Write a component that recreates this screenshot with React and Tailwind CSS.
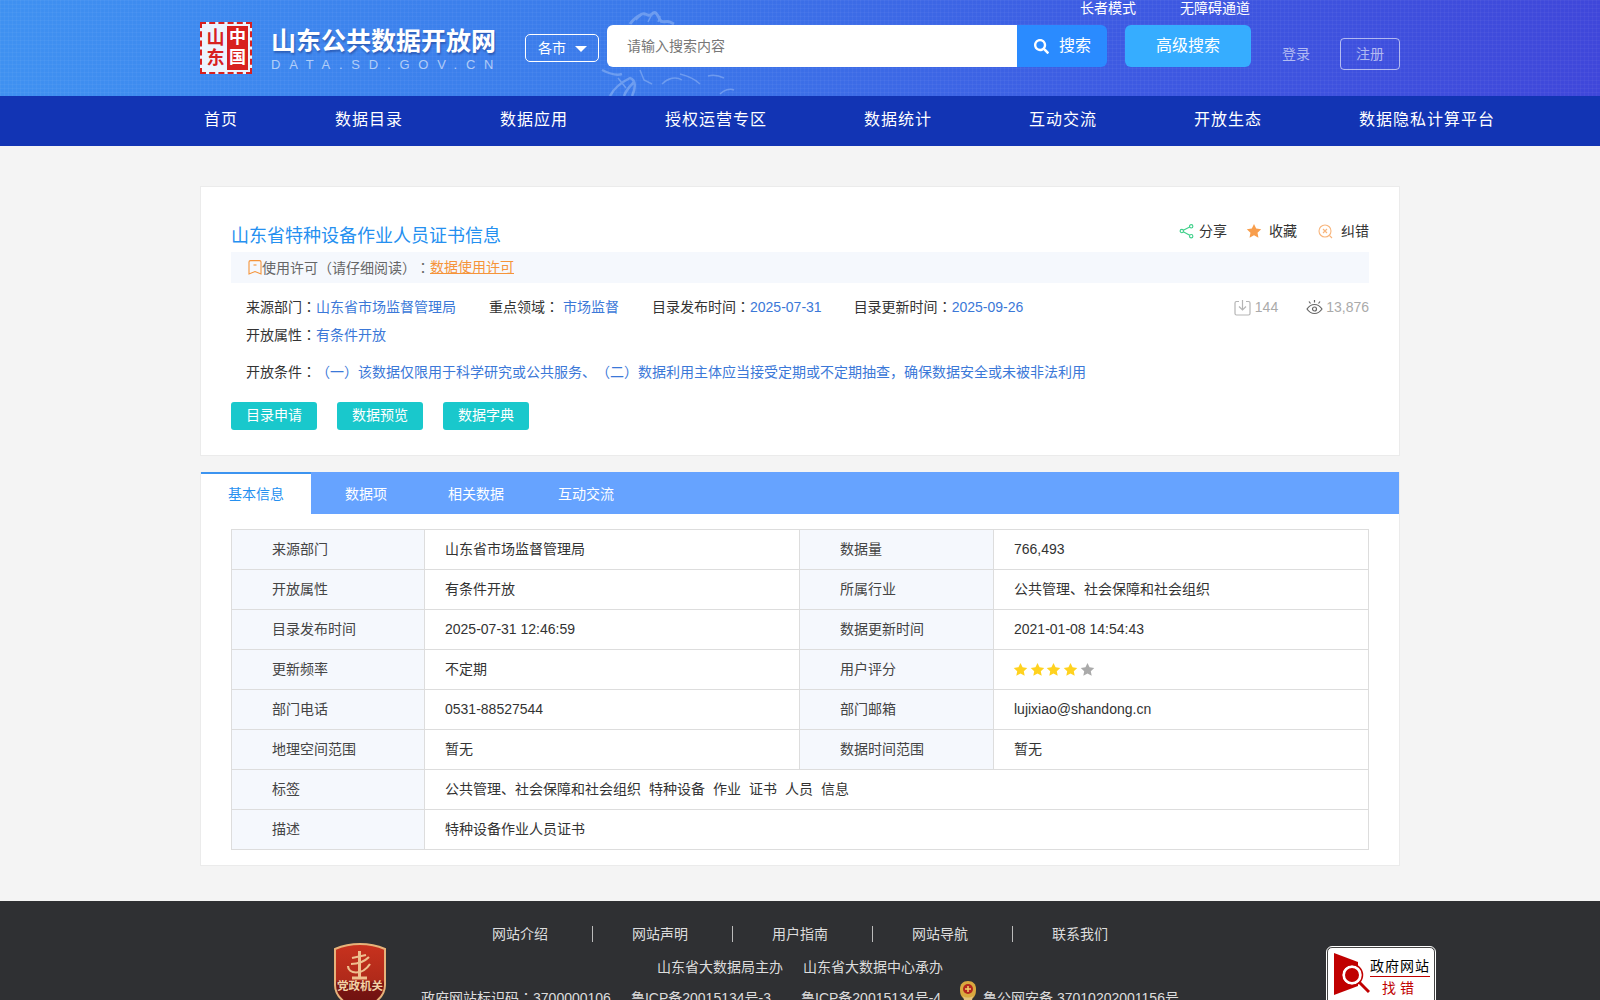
import { FaSearch } from "react-icons/fa";

const FONT = "font-['Liberation_Sans','Noto_Sans_CJK_SC',sans-serif]";

const navItems = ["首页", "数据目录", "数据应用", "授权运营专区", "数据统计", "互动交流", "开放生态", "数据隐私计算平台"];

const tabs = [
  { name: "基本信息", cls: "w-[110px] bg-white text-[#2590f0] border-t-2 border-[#3c94f0] justify-center" },
  { name: "数据项", cls: "w-[110px] pt-[2px] pl-[34px] text-white" },
  { name: "相关数据", cls: "w-[110px] pt-[2px] pl-[27px] text-white" },
  { name: "互动交流", cls: "w-[110px] pt-[2px] pl-[27px] text-white" },
];

const rows = [
  ["来源部门", "山东省市场监督管理局", "数据量", "766,493"],
  ["开放属性", "有条件开放", "所属行业", "公共管理、社会保障和社会组织"],
  ["目录发布时间", "2025-07-31 12:46:59", "数据更新时间", "2021-01-08 14:54:43"],
  ["更新频率", "不定期", "用户评分", "stars"],
  ["部门电话", "0531-88527544", "部门邮箱", "lujixiao@shandong.cn"],
  ["地理空间范围", "暂无", "数据时间范围", "暂无"],
];

const Star = ({ className, size = 15 }) => (
  <svg width={size} height={size} viewBox="0 0 24 24" className={className} fill="currentColor">
    <path d="M12 1.500l3.300 6.900 7.500 1-5.500 5.200 1.400 7.500L12 18.500l-6.700 3.600 1.400-7.500L1.200 9.400l7.500-1z" />
  </svg>
);

// full-width colon sitting in the middle of its box
const Colon = () => <span className="font-['Noto_Sans_CJK_TC',sans-serif]">：</span>;

const Logo = () => (
  <div className="flex items-start shrink-0">
    <div className="w-[52px] h-[52px] mt-[22px] p-[2px] bg-white/90 border-2 border-dashed border-[#d8201f] flex">
      <div className="w-[24px] flex flex-col items-center justify-center text-[#d8201f] text-[18px] leading-[20px] font-bold">
        <span>山</span>
        <span>东</span>
      </div>
      <div className="w-[22px] bg-[#d8201f] flex flex-col items-center justify-center text-white text-[17px] leading-[20px] font-bold">
        <span>中</span>
        <span>国</span>
      </div>
    </div>
    <div className="ml-[19px] mt-[25px] w-[225px]">
      <div className="text-[25px] leading-[32px] font-bold text-white whitespace-nowrap [text-shadow:1px_2px_2px_rgba(0,0,60,.3)]">
        山东公共数据开放网
      </div>
      <div className="text-[13px] leading-[16px] text-white/60 tracking-[8.800px] whitespace-nowrap">
        DATA.SD.GOV.CN
      </div>
    </div>
  </div>
);

const Header = () => (
  <div className="h-[96px] bg-[linear-gradient(90deg,#3f91f1_0%,#3b79ea_40%,#3d5ae2_70%,#3f47da_100%)] relative overflow-hidden">
    {/* faint grid texture + map */}
    <div className="absolute inset-0 bg-[linear-gradient(rgba(255,255,255,.035)_1px,transparent_1px),linear-gradient(90deg,rgba(255,255,255,.035)_1px,transparent_1px)] bg-[length:4px_4px]" />
    <svg className="absolute left-[600px] top-0 opacity-35" width="200" height="96" viewBox="0 0 200 96" fill="none" stroke="#c4dbfb" strokeWidth="1.500">
      <path d="M30 24c4-6 8-8 12-10s6 4 10 0 6 2 8 6 6 0 10 2 4 2 4 2" strokeWidth="3" />
      <path d="M36 20l6-6M48 22l4-8M58 22l2-6" />
      <path d="M2 70c8 4 14 6 20 4M10 96c4-8 12-14 20-18 6 2 6 10 2 18M24 96c2-6 6-10 10-14" strokeWidth="2.500" />
      <path d="M18 78l8 10M40 70l4 10 8 4" />
      <path d="M62 84c6-6 14-8 20-4M80 74c8 2 14 4 20 10M108 76c6-2 12 0 16 2M120 94c4-4 10-6 14-4" />
    </svg>
    <div className="w-[1200px] mx-auto h-full flex relative">
      <Logo />
      <div className="ml-[29px] flex-1">
        <div className="h-[25px] flex items-start pl-[555px] text-[14px] leading-[17px] text-white whitespace-nowrap">
          <span>长者模式</span>
          <span className="ml-[44px]">无障碍通道</span>
        </div>
        <div className="flex items-start whitespace-nowrap">
          <div className="mt-[9px] w-[74px] h-[28px] border border-white rounded-[5px] flex items-center pl-[12px] text-white text-[14px]">
            各市
            <span className="ml-[9px] mt-[2px] w-0 h-0 border-x-[6px] border-x-transparent border-t-[6px] border-t-white" />
          </div>
          <div className="ml-[8px] w-[410px] h-[42px] bg-white rounded-l-[6px] flex items-center pl-[20px] text-[14px] text-[#777]">
            请输入搜索内容
          </div>
          <div className="w-[90px] h-[42px] bg-[#2a8bff] rounded-r-[6px] flex items-center pl-[17px] text-white text-[16px]">
            <FaSearch size={15} />
            <span className="ml-[10px]">搜索</span>
          </div>
          <div className="ml-[18px] w-[126px] h-[42px] bg-[#36adff] rounded-[6px] flex items-center justify-center text-white text-[16px]">
            高级搜索
          </div>
          <div className="ml-[31px] mt-[20px] text-[14px] leading-[18px] text-white/60">登录</div>
          <div className="ml-[30px] mt-[13px] w-[60px] h-[32px] border border-white/60 rounded-[4px] flex items-center justify-center text-[14px] text-white/60">
            注册
          </div>
        </div>
      </div>
    </div>
  </div>
);

const Nav = () => (
  <div className="h-[50px] bg-[#1234b4]">
    <div className="w-[1200px] mx-auto h-full pl-[4px] pb-[2px] flex items-center gap-[97px] text-[16px] text-white tracking-[1px] whitespace-nowrap">
      {navItems.map((item) => (
        <span key={item}>{item}</span>
      ))}
    </div>
  </div>
);

const ShareIcon = () => (
  <svg width="15" height="16" viewBox="0 0 16 16" fill="none" stroke="#3fd08a" strokeWidth="1.200">
    <circle cx="13" cy="3" r="1.800" />
    <circle cx="3" cy="8" r="1.800" />
    <circle cx="13" cy="13.500" r="1.800" />
    <path d="M4.600 7.200l6.800-3.400M4.600 8.800l6.800 3.800" />
  </svg>
);

const WrongIcon = () => (
  <svg width="15" height="15" viewBox="0 0 15 15" fill="none" stroke="#f8b57c" strokeWidth="1.100">
    <circle cx="7" cy="7" r="6" />
    <path d="M5 5l4 4M9 5l-4 4M11.500 11.500l2.500 2.500" />
  </svg>
);

const BookmarkIcon = () => (
  <svg width="14" height="15" viewBox="0 0 14 15" fill="none" stroke="#f5943a" strokeWidth="1.100">
    <path d="M2.500.600h9a1.500 1.500 0 0 1 1.500 1.500V14L7 11.500 1 14V2.100A1.500 1.500 0 0 1 2.500.600z" />
    <path d="M5.500 5h3" />
  </svg>
);

const DownloadIcon = () => (
  <svg width="17" height="17" viewBox="0 0 17 17" fill="none" stroke="#b5b5b5" strokeWidth="1.200">
    <path d="M5 2.500H2.500A1.500 1.500 0 0 0 1 4v10.500A1.500 1.500 0 0 0 2.500 16h12a1.500 1.500 0 0 0 1.500-1.500V4a1.500 1.500 0 0 0-1.500-1.500H12" />
    <path d="M8.500 1v9M5 7.500l3.500 3.500L12 7.500" />
  </svg>
);

const EyeIcon = () => (
  <svg width="17" height="17" viewBox="0 0 17 17" fill="none" stroke="#666" strokeWidth="1.200">
    <path d="M1 10c2-3 4.500-4.500 7.500-4.500S14 7 16 10c-2 3-4.500 4.500-7.500 4.500S3 13 1 10z" />
    <circle cx="8.500" cy="10" r="2" />
    <path d="M8.500 3.500V1M4.500 4.500L3 2.500M12.500 4.500L14 2.500" />
  </svg>
);

const InfoLink = ({ children }) => <span className="text-[#3b78d8]">{children}</span>;

const DetailCard = () => (
  <div className="mt-[40px] w-[1200px] mx-auto h-[270px] bg-white border border-[#ebebeb] px-[30px] pt-[36px] text-[14px]">
    <div className="flex items-start justify-between h-[29px]">
      <div className="mt-[1px] text-[18px] leading-[24px] text-[#2590f0]">山东省特种设备作业人员证书信息</div>
      <div className="flex items-center h-[18px] -mt-[1px] text-[#333]">
        <ShareIcon />
        <span className="ml-[5px]">分享</span>
        <Star className="ml-[19px] text-[#f89e4d]" size={16} />
        <span className="ml-[7px]">收藏</span>
        <span className="ml-[21px] flex"><WrongIcon /></span>
        <span className="ml-[8px]">纠错</span>
      </div>
    </div>
    <div className="h-[31px] bg-[#f5f8fd] pl-[17px] flex items-center text-[#666]">
      <BookmarkIcon />
      <span>使用许可（请仔细阅读）<Colon /></span>
      <span className="text-[#f5943a] underline">数据使用许可</span>
    </div>
    <div className="mt-[10px] pl-[15px] h-[28px] flex items-center text-[#333] whitespace-nowrap">
      <span>来源部门<Colon /></span>
      <InfoLink>山东省市场监督管理局</InfoLink>
      <span className="ml-[33px]">重点领域<Colon /></span>
      <span className="ml-[4px]"><InfoLink>市场监督</InfoLink></span>
      <span className="ml-[33px]">目录发布时间<Colon /></span>
      <InfoLink>2025-07-31</InfoLink>
      <span className="ml-[32px]">目录更新时间<Colon /></span>
      <InfoLink>2025-09-26</InfoLink>
      <div className="ml-auto flex items-center text-[#aaa]">
        <DownloadIcon />
        <span className="ml-[4px]">144</span>
        <span className="ml-[28px] flex"><EyeIcon /></span>
        <span className="ml-[3px]">13,876</span>
      </div>
    </div>
    <div className="pl-[15px] h-[28px] flex items-center text-[#333]">
      <span>开放属性<Colon /></span>
      <InfoLink>有条件开放</InfoLink>
    </div>
    <div className="mt-[9px] pl-[15px] h-[28px] flex items-center text-[#333] whitespace-nowrap">
      <span>开放条件<Colon /></span>
      <InfoLink>（一）该数据仅限用于科学研究或公共服务、（二）数据利用主体应当接受定期或不定期抽查，确保数据安全或未被非法利用</InfoLink>
    </div>
    <div className="mt-[16px] flex gap-[20px]">
      {["目录申请", "数据预览", "数据字典"].map((b) => (
        <div key={b} className="w-[86px] h-[28px] pb-[2px] bg-[#19c8cc] rounded-[3px] flex items-center justify-center text-white">
          {b}
        </div>
      ))}
    </div>
  </div>
);

const Label = ({ children }) => (
  <td className="h-[40px] pl-[40px] bg-[#f5f8fd] border border-[#ddd] text-[#444]">{children}</td>
);

const Value = ({ children, span }) => (
  <td colSpan={span} className="h-[40px] pl-[20px] border border-[#ddd] text-[#333]">{children}</td>
);

const Rating = () => (
  <div className="flex gap-[1.700px] -ml-[1px]">
    {[0, 1, 2, 3].map((i) => (
      <Star key={i} className="text-[#ffd21f]" />
    ))}
    <Star className="text-[#aaa]" />
  </div>
);

const InfoCard = () => (
  <div className="mt-[16px] w-[1200px] mx-auto h-[394px] bg-white border-x border-b border-[#ebebeb] text-[14px]">
    <div className="h-[42px] bg-[#66a3ff] flex items-center">
      {tabs.map((t) => (
        <div key={t.name} className={`h-full flex items-center ${t.cls}`}>{t.name}</div>
      ))}
    </div>
    <div className="px-[30px] pt-[15px]">
      <table className="w-full border-collapse table-fixed">
        <colgroup>
          <col className="w-[193px]" />
          <col className="w-[375px]" />
          <col className="w-[194px]" />
          <col />
        </colgroup>
        <tbody>
          {rows.map((r) => (
            <tr key={r[0]}>
              <Label>{r[0]}</Label>
              <Value>{r[1]}</Value>
              <Label>{r[2]}</Label>
              <Value>{r[3] === "stars" ? <Rating /> : r[3]}</Value>
            </tr>
          ))}
          <tr>
            <Label>标签</Label>
            <Value span={3}>
              <span className="flex gap-[8px]">
                {["公共管理、社会保障和社会组织", "特种设备", "作业", "证书", "人员", "信息"].map((t) => (
                  <span key={t}>{t}</span>
                ))}
              </span>
            </Value>
          </tr>
          <tr>
            <Label>描述</Label>
            <Value span={3}>特种设备作业人员证书</Value>
          </tr>
        </tbody>
      </table>
    </div>
  </div>
);

const PartyBadge = () => (
  <svg width="52" height="66" viewBox="0 0 52 66">
    <defs>
      <linearGradient id="badgeFill" x1="0" y1="0" x2="0" y2="1">
        <stop offset="0" stopColor="#c8321e" />
        <stop offset="0.55" stopColor="#b02a1a" />
        <stop offset="0.6" stopColor="#7c1512" />
        <stop offset="1" stopColor="#6c1210" />
      </linearGradient>
    </defs>
    <path d="M26 1c9 0 18 2 25 5v36c0 12-11 20-25 24C12 62 1 54 1 42V6C8 3 17 1 26 1z" fill="url(#badgeFill)" stroke="#e6b27a" strokeWidth="2" />
    <path d="M25.500 8v27M18 35h15" stroke="#eebf8e" strokeWidth="3" fill="none" />
    <path d="M18 15l14-3M17 21c4 0 12-1 18-7M14 23c0 8 14 10 22-2" stroke="#eebf8e" strokeWidth="2.200" fill="none" />
    <text x="26" y="47" textAnchor="middle" fontSize="11.500" fontWeight="700" fill="#f3d2a6">党政机关</text>
  </svg>
);

const ReportBadge = () => (
  <div className="w-[108px] h-[70px] bg-white rounded-[5px] border border-[#444] outline outline-1 outline-white flex pl-[6px] pt-[5px]">
    <svg width="36" height="44" viewBox="0 0 36 44" className="shrink-0">
      <path d="M0 0l24 9v24L0 42z" fill="#c00000" />
      <circle cx="18" cy="22" r="8.500" fill="#c00000" stroke="#fff" strokeWidth="3" />
      <circle cx="18" cy="22" r="10.500" fill="none" stroke="#c00000" strokeWidth="1.500" />
      <path d="M25 29l10 10" stroke="#c00000" strokeWidth="3" />
    </svg>
    <div className="flex flex-col items-center">
      <div className="mt-[4px] text-[14px] leading-[18px] text-black tracking-[1px] border-b border-[#c00000] pb-[1px] whitespace-nowrap">政府网站</div>
      <div className="mt-[2px] text-[14px] leading-[18px] text-[#c00000] tracking-[4px]">找错</div>
    </div>
  </div>
);

const Emblem = () => (
  <svg width="18" height="21" viewBox="0 0 18 21">
    <path d="M9 0c5 0 8 3 8 8s-1 7-3 9l-5 3-5-3c-2-2-3-4-3-9s3-8 8-8z" fill="#d9a93f" />
    <circle cx="9" cy="8" r="5" fill="#b3261e" />
    <path d="M6 8h6M9 5v6" stroke="#f2d26a" strokeWidth="1.500" />
    <path d="M4 15c3 2 7 2 10 0l-1 4H5z" fill="#e3c27a" />
  </svg>
);

const Footer = () => (
  <div className="mt-[35px] h-[140px] bg-[#2f3033] text-[14px] text-[#ddd]">
    <div className="w-[1200px] mx-auto flex">
      <div className="w-[134px] ml-[134px] pt-[42px] shrink-0">
        <PartyBadge />
      </div>
      <div className="w-[800px] flex-none -ml-[68px] flex flex-col items-center">
        <div className="mt-[25px] ml-[6px] h-[16px] flex items-center">
          {["网站介绍", "网站声明", "用户指南", "网站导航", "联系我们"].map((l, i) => (
            <span key={l} className={`h-[16px] w-[140px] pl-[39px] flex items-center leading-[16px] ${i < 4 ? "border-r border-[#bbb]" : ""}`}>
              {l}
            </span>
          ))}
        </div>
        <div className="mt-[16px] h-[18px] flex items-center gap-[20px]">
          <span>山东省大数据局主办</span>
          <span>山东省大数据中心承办</span>
        </div>
        <div className="mt-[11px] flex items-center whitespace-nowrap">
          <span>政府网站标识码<Colon />3700000106</span>
          <span className="ml-[20px]">鲁ICP备20015134号-3</span>
          <span className="ml-[30px]">鲁ICP备20015134号-4</span>
          <span className="ml-[18px] mr-[6px] -mt-[14px] flex"><Emblem /></span>
          <span>鲁公网安备 37010202001156号</span>
        </div>
      </div>
      <div className="ml-auto mr-[-35px] pt-[46px]">
        <ReportBadge />
      </div>
    </div>
  </div>
);

export default function App() {
  return (
    <div className={`h-[1000px] overflow-hidden bg-[#f4f4f4] [text-spacing-trim:space-all] ${FONT}`}>
      <Header />
      <Nav />
      <DetailCard />
      <InfoCard />
      <Footer />
    </div>
  );
}
